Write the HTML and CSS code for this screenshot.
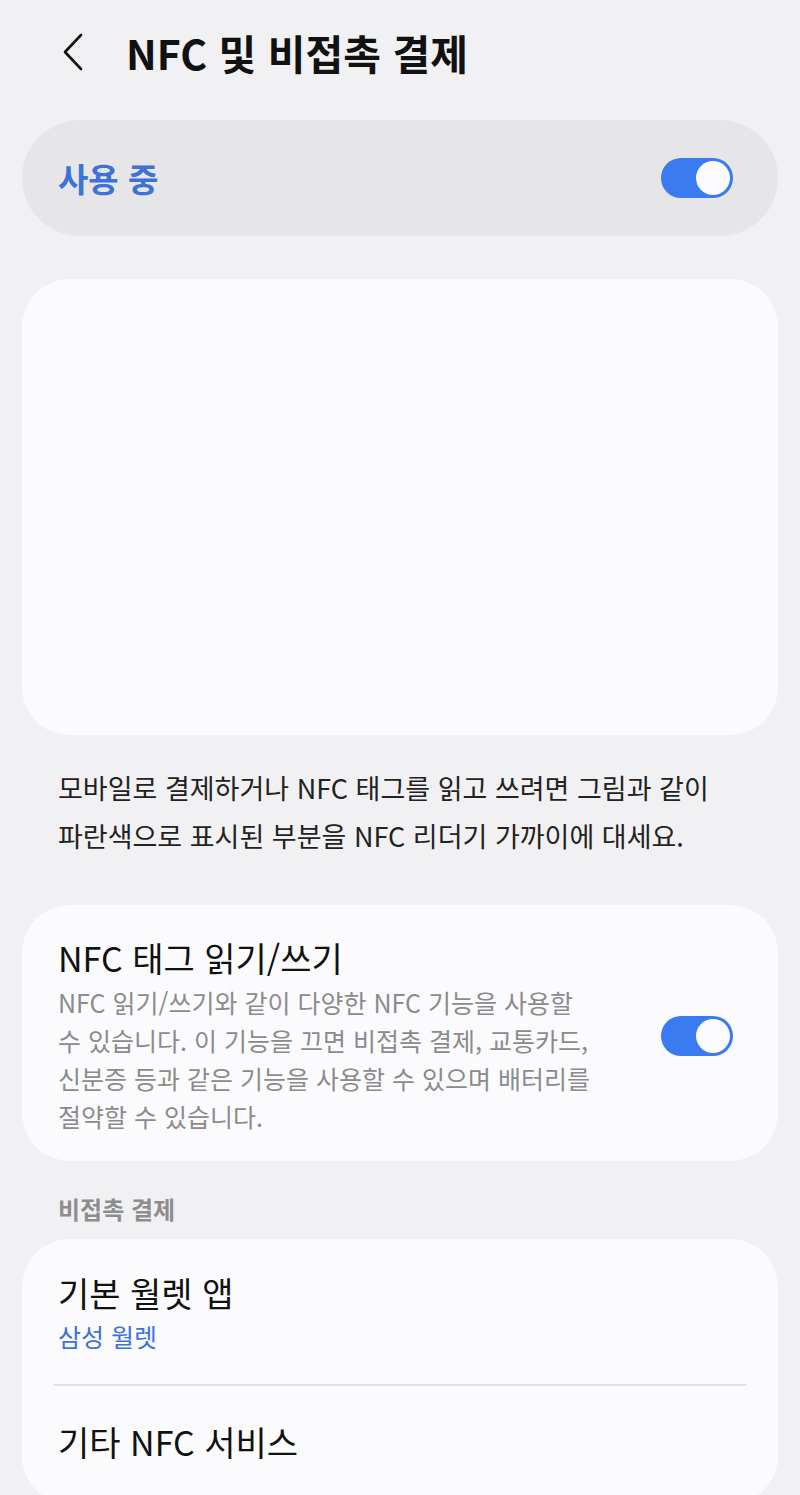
FILE: index.html
```html
<!DOCTYPE html>
<html lang="ko">
<head>
  <meta charset="UTF-8" />
  <meta name="viewport" content="width=device-width, initial-scale=1.0"/>
  <title>NFC 및 비접촉 결제</title>
  <link rel="stylesheet" href="styles.css">
</head>
<body>
  <header class="topbar">
    <a class="back" href="#" aria-label="뒤로">
      <svg width="22" height="38" viewBox="0 0 22 38">
        <path d="M19 2 L3 19 L19 36" fill="none" stroke="#111" stroke-width="2.6" stroke-linecap="round" stroke-linejoin="round"/>
      </svg>
    </a>
    <h1>NFC 및 비접촉 결제</h1>
  </header>

  <div class="master">
    <span class="master-label">사용 중</span>
    <span class="switch on"><span class="knob"></span></span>
  </div>

  <div class="illustration"></div>

  <p class="desc">모바일로 결제하거나 NFC 태그를 읽고 쓰려면 그림과 같이 파란색으로 표시된 부분을 NFC 리더기 가까이에 대세요.</p>

  <div class="card row">
    <div class="row-text">
      <div class="item-title">NFC 태그 읽기/쓰기</div>
      <div class="item-sub">NFC 읽기/쓰기와 같이 다양한 NFC 기능을 사용할 수 있습니다. 이 기능을 끄면 비접촉 결제, 교통카드, 신분증 등과 같은 기능을 사용할 수 있으며 배터리를 절약할 수 있습니다.</div>
    </div>
    <span class="switch on"><span class="knob"></span></span>
  </div>

  <div class="section">비접촉 결제</div>

  <div class="card list">
    <div class="list-item">
      <div class="item-title">기본 월렛 앱</div>
      <div class="item-value">삼성 월렛</div>
    </div>
    <div class="divider"></div>
    <div class="list-item last">
      <div class="item-title">기타 NFC 서비스</div>
    </div>
  </div>
</body>
</html>
```

FILE: styles.css
```css
body {
  font-family: "Noto Sans CJK KR", "Noto Sans", sans-serif;
  background-color: #f1f1f3;
  margin: 0;
  padding: 0 22px;
  color: #111;
  word-break: keep-all;
}

.topbar {
  height: 104px;
  display: flex;
  align-items: center;
  gap: 42px;
  padding-left: 40px;
}

.back {
  display: flex;
}

.topbar h1 {
  margin: 0;
  font-size: 41px;
  font-weight: bold;
  line-height: 1;
  color: #111;
}

.master {
  margin-top: 16px;
  height: 116px;
  border-radius: 58px;
  background-color: #e6e6e9;
  display: flex;
  align-items: center;
  justify-content: space-between;
  padding: 0 45px 0 36px;
}

.master-label {
  font-size: 33px;
  font-weight: bold;
  color: #3d72d6;
}

.switch {
  width: 72px;
  height: 40px;
  border-radius: 20px;
  background-color: #3b7bf1;
  display: flex;
  align-items: center;
  justify-content: flex-end;
  padding: 0 3px;
  box-sizing: border-box;
  flex-shrink: 0;
}

.knob {
  width: 34px;
  height: 34px;
  border-radius: 50%;
  background-color: #fcfcfe;
}

.illustration {
  margin-top: 43px;
  height: 456px;
  border-radius: 48px;
  background-color: #fbfbfd;
}

.desc {
  margin: 29px 0 45px;
  padding: 0 36px;
  font-size: 27px;
  line-height: 48px;
  color: #222;
}

.card {
  background-color: #fbfbfd;
  border-radius: 48px;
}

.row {
  display: flex;
  align-items: center;
  justify-content: space-between;
  padding: 31px 45px 26px 36px;
}

.row-text {
  width: 538px;
}

.item-title {
  font-size: 34px;
  line-height: 44px;
  color: #111;
}

.item-sub {
  margin-top: 3px;
  font-size: 25px;
  line-height: 38px;
  color: #8b8b8d;
}

.section {
  margin: 33px 0 15px;
  padding-left: 36px;
  font-size: 24px;
  line-height: 30px;
  font-weight: bold;
  color: #8d8d8f;
}

.list {
  padding-bottom: 40px;
}

.list-item {
  padding: 32px 36px 0;
}

.list-item.last {
  padding-top: 34px;
}

.item-value {
  margin-top: 3px;
  font-size: 25px;
  line-height: 36px;
  color: #3d72d6;
}

.divider {
  margin: 30px 32px 0;
  height: 2px;
  background-color: #e0e0e3;
}
```
